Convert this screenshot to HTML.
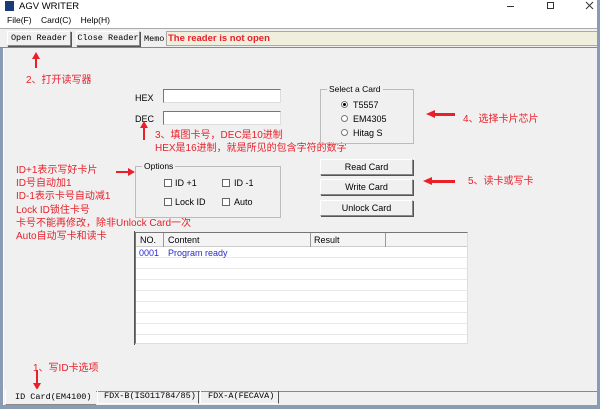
<!DOCTYPE html>
<html><head><meta charset="utf-8"><style>
*{margin:0;padding:0;box-sizing:border-box}
body{width:600px;height:409px;position:relative;overflow:hidden;background:#f0f0f0;font-family:"Liberation Sans",Arial,sans-serif;font-size:9px;color:#000}
.a{position:absolute}
.cn{font-family:"Liberation Sans","Noto Sans CJK SC",sans-serif;color:#e8202a;font-size:10px;line-height:13px;white-space:nowrap}
.mono{font-family:"Liberation Mono","Noto Sans CJK SC",monospace;font-size:8.5px}
.btn{position:absolute;background:#f0f0f0;border:1px solid;border-color:#fff #888 #888 #fff;box-shadow:1px 1px 0 #555;text-align:center}
.inp{position:absolute;background:#fff;border:1px solid;border-color:#777 #ddd #ddd #777}
.grp{position:absolute;border:1px solid #bbb}
.grp span{position:absolute;top:-6px;left:6px;background:#f0f0f0;padding:0 2px;font-size:8.5px}
.cb{position:absolute;width:8px;height:8px;border:1px solid #666;background:#fff}
.rd{position:absolute;width:7px;height:7px;border-radius:50%;border:1px solid #777;background:#fff}
</style></head><body>
<div class="a" style="left:0;top:0;width:600px;height:13px;background:#fff"></div>
<div class="a" style="left:5px;top:1px;width:9px;height:10px;background:#1a3a7a"></div>
<div class="a" style="left:19px;top:0;font-size:9.5px;line-height:13px">AGV WRITER</div>
<div class="a" style="left:507px;top:6px;width:7px;height:1px;background:#333"></div>
<div class="a" style="left:547px;top:2px;width:7px;height:7px;border:1px solid #333"></div>
<svg class="a" style="left:585px;top:1px" width="9" height="9"><path d="M1 1L8 8M8 1L1 8" stroke="#333" stroke-width="1"/></svg>
<div class="a" style="left:0;top:13px;width:600px;height:15px;background:#fff"></div>
<div class="a" style="left:7px;top:15px;font-size:8.5px">File(F)&nbsp;&nbsp;&nbsp;&nbsp;Card(C)&nbsp;&nbsp;&nbsp;&nbsp;Help(H)</div>
<div class="a" style="left:0;top:28px;width:600px;height:1px;background:#aaa"></div>
<div class="btn mono" style="left:7px;top:31px;width:64px;height:15px;line-height:13px">Open Reader</div>
<div class="btn mono" style="left:76px;top:31px;width:64px;height:15px;line-height:13px">Close Reader</div>
<div class="a mono" style="left:144px;top:34px">Memo</div>
<div class="a" style="left:166px;top:31px;width:436px;height:15px;background:#f0eedc;border:1px solid #aaa;color:#e8202a;font-weight:bold;font-size:9.5px;line-height:13px;padding-left:1px">The reader is not open</div>
<div class="a" style="left:0;top:47px;width:600px;height:1px;background:#888"></div>
<div class="a" style="left:0;top:48px;width:3px;height:361px;background:#8a9cb4"></div>
<div class="a" style="left:3px;top:48px;width:1px;height:357px;background:#fff"></div>
<div class="a" style="left:597px;top:0;width:3px;height:409px;background:#8a9cb4"></div>
<div class="a" style="left:0;top:405px;width:600px;height:4px;background:#8a9cb4"></div>

<div class="a" style="left:35px;top:54px;width:2px;height:14px;background:#e8202a"></div>
<div class="a" style="left:32px;top:52px;border-left:4px solid transparent;border-right:4px solid transparent;border-bottom:7px solid #e8202a"></div>
<div class="a cn" style="left:26px;top:74px">2、打开读写器</div>

<div class="a" style="left:135px;top:93px">HEX</div>
<div class="inp" style="left:163px;top:89px;width:118px;height:14px"></div>
<div class="a" style="left:135px;top:114px">DEC</div>
<div class="inp" style="left:163px;top:111px;width:118px;height:14px"></div>
<div class="a" style="left:143px;top:124px;width:2px;height:16px;background:#e8202a"></div>
<div class="a" style="left:140px;top:121px;border-left:4px solid transparent;border-right:4px solid transparent;border-bottom:7px solid #e8202a"></div>
<div class="a cn" style="left:155px;top:129px">3、填图卡号，DEC是10进制</div>
<div class="a cn" style="left:155px;top:142px">HEX是16进制，就是所见的包含字符的数字</div>

<div class="a cn" style="left:16px;top:164px;line-height:13.2px">ID+1表示写好卡片<br>ID号自动加1<br>ID-1表示卡号自动减1<br>Lock ID锁住卡号<br>卡号不能再修改，除非Unlock Card一次<br>Auto自动写卡和读卡</div>
<div class="a" style="left:116px;top:171px;width:16px;height:2px;background:#e8202a"></div>
<div class="a" style="left:128px;top:168px;border-top:4px solid transparent;border-bottom:4px solid transparent;border-left:7px solid #e8202a"></div>

<div class="grp" style="left:135px;top:166px;width:146px;height:52px"><span>Options</span></div>
<div class="cb" style="left:164px;top:179px"></div><div class="a" style="left:175px;top:178px">ID +1</div>
<div class="cb" style="left:222px;top:179px"></div><div class="a" style="left:234px;top:178px">ID -1</div>
<div class="cb" style="left:164px;top:198px"></div><div class="a" style="left:175px;top:197px">Lock ID</div>
<div class="cb" style="left:222px;top:198px"></div><div class="a" style="left:234px;top:197px">Auto</div>

<div class="grp" style="left:320px;top:89px;width:94px;height:55px"><span>Select a Card</span></div>
<div class="rd" style="left:341px;top:101px"></div><div class="a" style="left:343px;top:103px;width:3px;height:3px;border-radius:50%;background:#000"></div>
<div class="a" style="left:353px;top:100px">T5557</div>
<div class="rd" style="left:341px;top:115px"></div><div class="a" style="left:353px;top:114px">EM4305</div>
<div class="rd" style="left:341px;top:129px"></div><div class="a" style="left:353px;top:128px">Hitag S</div>
<div class="a" style="left:433px;top:113px;width:22px;height:3px;background:#e8202a"></div>
<div class="a" style="left:426px;top:110px;border-top:4px solid transparent;border-bottom:4px solid transparent;border-right:9px solid #e8202a"></div>
<div class="a cn" style="left:463px;top:113px">4、选择卡片芯片</div>

<div class="btn" style="left:320px;top:159px;width:93px;height:16px;line-height:14px">Read Card</div>
<div class="btn" style="left:320px;top:179px;width:93px;height:16px;line-height:14px">Write Card</div>
<div class="btn" style="left:320px;top:200px;width:93px;height:16px;line-height:14px">Unlock Card</div>
<div class="a" style="left:430px;top:180px;width:25px;height:3px;background:#e8202a"></div>
<div class="a" style="left:423px;top:177px;border-top:4px solid transparent;border-bottom:4px solid transparent;border-right:9px solid #e8202a"></div>
<div class="a cn" style="left:468px;top:175px">5、读卡或写卡</div>

<div class="a" style="left:135px;top:232px;width:333px;height:112px;background:#fff;border:1px solid;border-color:#777 #ddd #ddd #777;overflow:hidden">
 <div style="position:absolute;left:0;top:0;width:333px;height:14px;background:#f4f4f4;border-bottom:1px solid #ccc"></div>
 <div style="position:absolute;left:27px;top:0;width:1px;height:112px;background:#e4e4e4"></div>
 <div style="position:absolute;left:174px;top:0;width:1px;height:112px;background:#e4e4e4"></div>
 <div style="position:absolute;left:249px;top:0;width:1px;height:112px;background:#e4e4e4"></div>
 <div style="position:absolute;left:27px;top:0;width:1px;height:14px;background:#999"></div>
 <div style="position:absolute;left:174px;top:0;width:1px;height:14px;background:#999"></div>
 <div style="position:absolute;left:249px;top:0;width:1px;height:14px;background:#999"></div>
 <div style="position:absolute;left:0;top:14px;width:333px;height:98px;background:repeating-linear-gradient(#fff 0 10px,#e8e8e8 10px 11px)"></div>
 <div style="position:absolute;left:4px;top:2px">NO.</div>
 <div style="position:absolute;left:32px;top:2px">Content</div>
 <div style="position:absolute;left:178px;top:2px">Result</div>
 <div style="position:absolute;left:3px;top:15px;color:#2a2ad0">0001</div>
 <div style="position:absolute;left:32px;top:15px;color:#2a2ad0">Program ready</div>
</div>
<div class="a" style="left:134px;top:231px;width:1px;height:114px;background:#555"></div>

<div class="a cn" style="left:33px;top:362px">1、写ID卡选项</div>
<div class="a" style="left:36px;top:370px;width:2px;height:14px;background:#e8202a"></div>
<div class="a" style="left:33px;top:383px;border-left:4px solid transparent;border-right:4px solid transparent;border-top:7px solid #e8202a"></div>

<div class="a" style="left:5px;top:391px;width:592px;height:1px;background:#888"></div>
<div class="a mono" style="left:5px;top:389px;width:91px;height:16px;background:#f0f0f0;border-left:1px solid #fff;border-bottom:1px solid #888;line-height:17px;padding-left:9px">ID Card(EM4100)</div>
<div class="a mono" style="left:97px;top:391px;width:102px;height:13px;border:1px solid;border-color:#888 #555 #fff #fff;border-top:none;line-height:11px;padding-left:6px">FDX-B(ISO11784/85)</div>
<div class="a mono" style="left:200px;top:391px;width:79px;height:13px;border:1px solid;border-color:#888 #555 #fff #fff;border-top:none;line-height:11px;padding-left:7px">FDX-A(FECAVA)</div>
</body></html>
